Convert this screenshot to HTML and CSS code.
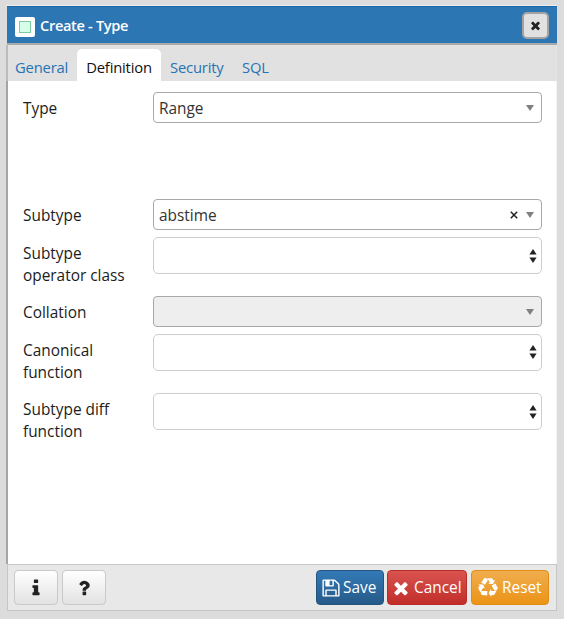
FILE: index.html
```html
<!DOCTYPE html>
<html lang="en">
<head>
<meta charset="utf-8">
<title>Create - Type</title>
<link rel="stylesheet" href="styles.css">
</head>
<body>
<div class="dialog">
  <header class="titlebar">
    <span class="type-icon"><span class="type-square"></span></span>
    <span class="title">Create - Type</span>
    <button class="close" aria-label="Close"><svg viewBox="0 0 1792 1792"><path d="M1490 1322q0 40-28 68l-136 136q-28 28-68 28t-68-28l-294-294-294 294q-28 28-68 28t-68-28l-136-136q-28-28-28-68t28-68l294-294-294-294q-28-28-28-68t28-68l136-136q28-28 68-28t68 28l294 294 294-294q28-28 68-28t68 28l136 136q28 28 28 68t-28 68l-294 294 294 294q28 28 28 68z"/></svg></button>
  </header>
  <nav class="tabs">
    <a class="tab general">General</a>
    <a class="tab active">Definition</a>
    <a class="tab security">Security</a>
    <a class="tab sql">SQL</a>
  </nav>
  <main class="form">
    <div class="row row-type"><label>Type</label><div class="select"><span class="value">Range</span><i class="caret"></i></div></div>
    <div class="row row-subtype"><label>Subtype</label><div class="select"><span class="value">abstime</span><svg class="clear" viewBox="0 0 8 8"><path d="M.8 .8L7.2 7.2M7.2 .8L.8 7.2"/></svg><i class="caret"></i></div></div>
    <div class="row row-input"><label>Subtype<br>operator class</label><div class="input"><svg class="spin" viewBox="0 0 8 14"><path d="M4 0L7.6 5.6H.4zM4 14L.4 8.6H7.6z"/></svg></div></div>
    <div class="row row-select"><label>Collation</label><div class="select disabled"><i class="caret"></i></div></div>
    <div class="row row-input"><label>Canonical<br>function</label><div class="input"><svg class="spin" viewBox="0 0 8 14"><path d="M4 0L7.6 5.6H.4zM4 14L.4 8.6H7.6z"/></svg></div></div>
    <div class="row row-input"><label>Subtype diff<br>function</label><div class="input"><svg class="spin" viewBox="0 0 8 14"><path d="M4 0L7.6 5.6H.4zM4 14L.4 8.6H7.6z"/></svg></div></div>
  </main>
  <footer class="footer">
    <button class="btn plain" aria-label="Info"><svg viewBox="0 0 1792 1792"><path d="M1216 1344v128q0 26-19 45t-45 19h-512q-26 0-45-19t-19-45v-128q0-26 19-45t45-19h64v-384h-64q-26 0-45-19t-19-45v-128q0-26 19-45t45-19h384q26 0 45 19t19 45v576h64q26 0 45 19t19 45zm-128-1152v192q0 26-19 45t-45 19h-256q-26 0-45-19t-19-45v-192q0-26 19-45t45-19h256q26 0 45 19t19 45z"/></svg></button>
    <button class="btn plain" aria-label="Help"><svg viewBox="0 0 1792 1792"><path d="M1088 1256v240q0 16-12 28t-28 12h-240q-16 0-28-12t-12-28v-240q0-16 12-28t28-12h240q16 0 28 12t12 28zm316-600q0 54-15.5 101t-35 76.5-55 59.5-57.5 43.5-61 35.5q-41 23-68.5 65t-27.5 67q0 17-12 32.5t-28 15.5h-240q-15 0-25.5-18.5t-10.5-37.5v-45q0-83 65-156.5t143-108.5q59-27 84-56t25-76q0-42-46.5-74t-107.5-32q-65 0-108 29-35 25-107 115-13 16-31 16-12 0-25-8l-164-125q-13-10-15.5-25t5.5-28q160-266 464-266 80 0 161 31t146 83 106 127.5 41 158.5z"/></svg></button>
    <span class="spacer"></span>
    <button class="btn save"><svg viewBox="0 0 1792 1792"><path d="M512 1536h768v-384h-768v384zm896 0h128v-896q0-14-10-38.5t-20-34.5l-281-281q-10-10-34-20t-39-10v416q0 40-28 68t-68 28h-576q-40 0-68-28t-28-68v-416h-128v1280h128v-416q0-40 28-68t68-28h832q40 0 68 28t28 68v416zm-384-928v-320q0-13-9.5-22.5t-22.5-9.5h-192q-13 0-22.5 9.5t-9.5 22.5v320q0 13 9.5 22.5t22.5 9.5h192q13 0 22.5-9.5t9.5-22.5zm640 32v928q0 40-28 68t-68 28h-1344q-40 0-68-28t-28-68v-1344q0-40 28-68t68-28h928q40 0 88 20t76 48l280 280q28 28 48 76t20 88z"/></svg><span>Save</span></button>
    <button class="btn cancel"><svg viewBox="0 0 1792 1792"><path d="M1490 1322q0 40-28 68l-136 136q-28 28-68 28t-68-28l-294-294-294 294q-28 28-68 28t-68-28l-136-136q-28-28-28-68t28-68l294-294-294-294q-28-28-28-68t28-68l136-136q28-28 68-28t68 28l294 294 294-294q28-28 68-28t68 28l136 136q28 28 28 68t-28 68l-294 294 294 294q28 28 28 68z"/></svg><span>Cancel</span></button>
    <button class="btn reset"><svg viewBox="0 0 1792 1792"><path d="M836 1169l-15 368-2 22-420-29q-36-3-67-31.5t-47-65.5q-11-27-14.5-55t4-65 12-55 21.5-64 19-53q78 12 509 28zm-387-586l180 379-147-92q-63 72-111.5 144.5t-72.5 125-39.5 94.5-18.5 63l-4 21-190-357q-17-26-18-56t6-47l8-18q35-63 114-188l-140-86zm1231 517l-188 359q-12 29-36.5 46.5t-43.5 20.5l-18 4q-71 7-219 12l8 164-230-367 211-362 7 173q170 16 283 5t170-33zm-785-924q-47 63-265 435l-317-187-19-12 225-356q20-31 60-45t80-10q24 2 48.5 12t42 21 41.5 33 36 34.5 36 39.5 32 35zm655 307l212 363q18 37 12.5 76t-27.5 74q-13 20-33 37t-38 28-48.5 22-47 16-51.5 14-46 12q-34-72-265-436l313-195zm-143-226l142-83-220 373-419-20 151-86q-34-89-75-166t-75.5-123.5-64.5-80-47-46.5l-17-13 405 1q31-3 58 10.5t39 28.5l11 15q39 61 112 190z"/></svg><span>Reset</span></button>
  </footer>
</div>
</body>
</html>
```
FILE: styles.css
```css
* { box-sizing: border-box; }
body {
  margin: 0;
  padding: 5px 7px 7px 6px;
  height: 619px;
  background: #dcdcdc;
  font-family: "Open Sans", sans-serif;
  font-size: 15.4px;
  color: #1c1c1c;
}
button { font: inherit; padding: 0; margin: 0; }
.dialog {
  height: 606px;
  display: flex;
  flex-direction: column;
  border-top: 1px solid #eee;
}
.titlebar {
  height: 39px;
  flex: none;
  display: flex;
  align-items: center;
  padding: 0 8px 0 8px;
  margin-left: 1px;
  background: #2c76b4;
  border-top: 1px solid #1c67ac;
  border-bottom: 2px solid #a9a9a9;
  color: #fff;
}
.type-icon {
  width: 20px;
  height: 20px;
  margin-top: 3px;
  padding: 4px;
  background: #fff;
  border-radius: 2px;
}
.type-square {
  display: block;
  height: 12px;
  background: #d5fde8;
  border: 1px solid #7ccba5;
}
.title {
  flex: 1;
  margin-left: 5px;
  font-size: 14.6px;
  font-weight: 600;
  letter-spacing: -0.33px;
}
.close {
  width: 27px;
  height: 27px;
  display: flex;
  align-items: center;
  justify-content: center;
  background: #e1e1e1;
  border: 2px solid #a3a3a3;
  border-radius: 5px;
}
.close svg { width: 13px; height: 13px; fill: #222; }
.tabs {
  height: 36px;
  flex: none;
  display: flex;
  align-items: flex-end;
  background: #e1e1e1;
  border-left: 2px solid #bbb;
  border-right: 1px solid #e6e6e6;
  font-size: 14.8px;
  letter-spacing: -0.2px;
}
.tab {
  height: 32px;
  line-height: 36px;
  color: #2573b5;
  white-space: nowrap;
}
.general { width: 69px; padding-left: 7px; }
.active {
  width: 84px;
  text-align: center;
  background: #fff;
  color: #111;
  border-radius: 5px 5px 0 0;
}
.security { width: 72px; padding-left: 9px; }
.sql { padding-left: 9px; }
.form {
  flex: 1;
  background: #fff;
  border-left: 2px solid #a5a5a5;
  border-right: 1px solid #f4f4f4;
  padding: 11px 14px 0 15px;
}
.row {
  display: grid;
  grid-template-columns: 130px 1fr;
  align-items: start;
}
.row-type { height: 107px; }
.row-subtype { height: 38px; }
.row-select { height: 37.5px; }
.row-input { height: 59.3px; }
label { padding-top: 6px; line-height: 22px; white-space: nowrap; }
.select {
  height: 31px;
  display: flex;
  align-items: center;
  padding: 0 7px 0 5px;
  border: 1px solid #a9a9a9;
  border-radius: 4px;
}
.disabled { background: #eee; }
.value { color: #333; padding-top: 1px; }
.caret {
  margin-left: auto;
  border: 4.5px solid transparent;
  border-top: 6px solid #808080;
  border-bottom: 0;
}
.clear {
  width: 8px;
  height: 8px;
  margin-left: auto;
  margin-right: 8px;
  stroke: #222;
  stroke-width: 1.5;
}
.clear + .caret { margin-left: 0; }
.input {
  height: 37px;
  display: flex;
  align-items: center;
  justify-content: flex-end;
  padding-right: 4px;
  border: 1px solid #ccc;
  border-radius: 5px;
}
.spin { width: 8px; height: 14px; fill: #222; }
.footer {
  height: 47px;
  flex: none;
  margin-left: 1px;
  display: flex;
  align-items: center;
  gap: 4px;
  padding: 0 7px 0 6px;
  background: #e8e8e8;
  border: 1px solid #c6c6c6;
}
.btn {
  height: 35px;
  display: flex;
  align-items: center;
  border: 1px solid;
  border-radius: 4px;
  color: #fff;
}
.btn svg { flex: none; fill: currentColor; }
.plain {
  width: 44px;
  justify-content: center;
  background: linear-gradient(#fff, #e2e2e2);
  border-color: #c9c9c9;
  color: #222;
}
.plain svg { width: 20px; height: 20px; }
.spacer { flex: 1; }
.save {
  width: 68px;
  padding-left: 4px;
  gap: 2px;
  background: linear-gradient(#337ab7, #265a88);
  border-color: #245580;
}
.cancel {
  width: 80px;
  padding-left: 3px;
  gap: 3px;
  background: linear-gradient(#d9534f, #c12e2a);
  border-color: #b92c28;
}
.save + .cancel { margin-left: -1px; }
.reset {
  width: 78px;
  padding-left: 6px;
  gap: 4px;
  background: linear-gradient(#f0ad4e, #eb9316);
  border-color: #e38d13;
}
.save svg, .reset svg, .cancel svg { width: 20px; height: 20px; }
```
